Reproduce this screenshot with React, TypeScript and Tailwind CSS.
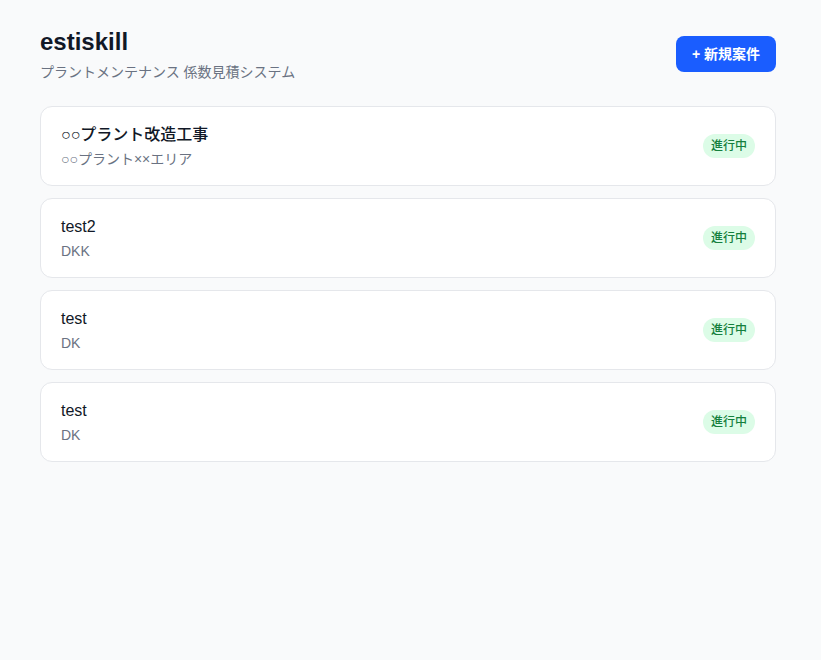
import React from "react";

const projects = [
  { name: "○○プラント改造工事", sub: "○○プラント××エリア" },
  { name: "test2", sub: "DKK" },
  { name: "test", sub: "DK" },
  { name: "test", sub: "DK" },
];

export default function App() {
  return (
    <div
      className="min-h-[660px] bg-[#f9fafb] text-gray-900"
      style={{ fontFamily: '"Liberation Sans", Arial, "Noto Sans CJK JP", sans-serif' }}
    >
      <div className="w-[736px] ml-10 pt-[26px]">
        <div className="flex items-center justify-between">
          <div>
            <h1 className="text-2xl font-bold leading-8 text-[#111827]">estiskill</h1>
            <p className="mt-1 text-sm leading-5 text-gray-500">プラントメンテナンス 係数見積システム</p>
          </div>
          <button className="h-9 px-4 rounded-lg bg-[#1a5dff] text-white text-sm font-bold">
            + 新規案件
          </button>
        </div>
        <div className="mt-6 flex flex-col gap-3">
          {projects.map((p, i) => (
            <div
              key={i}
              className="flex items-center justify-between rounded-xl border border-gray-200 bg-white px-5 py-4"
            >
              <div>
                <div className="text-base leading-6 font-medium text-[#111827]">{p.name}</div>
                <div className="mt-0.5 text-sm leading-5 text-gray-500">{p.sub}</div>
              </div>
              <span className="rounded-full bg-[#dcfce7] px-2 py-1 text-xs leading-4 font-medium text-[#15803d]">
                進行中
              </span>
            </div>
          ))}
        </div>
      </div>
    </div>
  );
}
